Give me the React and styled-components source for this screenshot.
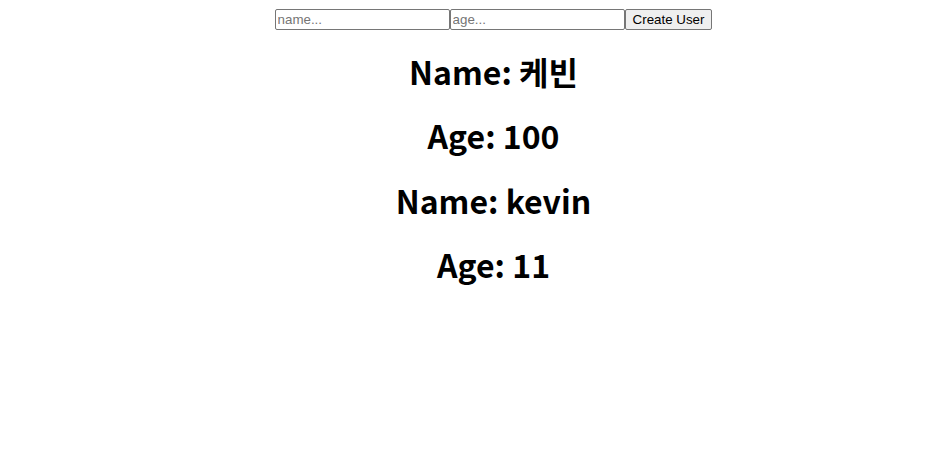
import React, { useState } from "react";
import styled, { createGlobalStyle } from "styled-components";

const GlobalStyle = createGlobalStyle`
  body {
    margin: 8px;
    background: #ffffff;
    color: #000000;
    font-family: "Noto Sans CJK KR", "Noto Sans", sans-serif;
  }
`;

// the reference is centred a little right of this window's middle
const Page = styled.div`
  text-align: center;
  padding-left: 51px;
`;

const Form = styled.div`
  display: flex;
  justify-content: center;
  align-items: flex-start;
  padding-top: 1px;
  height: 20px;
`;

const Field = styled.input`
  box-sizing: border-box;
  width: 175px;
  height: 21px;
  margin: 0;
  padding: 1px 2px;
  border: 1px solid #767676;
  border-radius: 2px;
  font-family: "Liberation Sans", Arial, sans-serif;
  font-size: 13.33px;
  color: #000;
  &::placeholder {
    color: #757575;
  }
`;

const Button = styled.button`
  box-sizing: border-box;
  height: 21px;
  margin: 0;
  padding: 1px 7px;
  border: 1px solid #767676;
  border-radius: 2px;
  background: #efefef;
  font-family: "Liberation Sans", Arial, sans-serif;
  font-size: 13.33px;
  color: #000;
`;

const Title = styled.h1`
  margin: 21.44px 0;
  font-size: 32px;
  font-weight: 700;
  line-height: 42.6px;
`;

function App() {
  const [name, setName] = useState("");
  const [age, setAge] = useState("");
  const users = [
    { name: "케빈", age: 100 },
    { name: "kevin", age: 11 },
  ];

  return (
    <Page>
      <GlobalStyle />
      <Form>
        <Field placeholder="name..." value={name} onChange={(e) => setName(e.target.value)} />
        <Field placeholder="age..." value={age} onChange={(e) => setAge(e.target.value)} />
        <Button>Create User</Button>
      </Form>
      {users.map((user, i) => (
        <div key={i}>
          <Title>Name: {user.name}</Title>
          <Title>Age: {user.age}</Title>
        </div>
      ))}
    </Page>
  );
}

export default App;
